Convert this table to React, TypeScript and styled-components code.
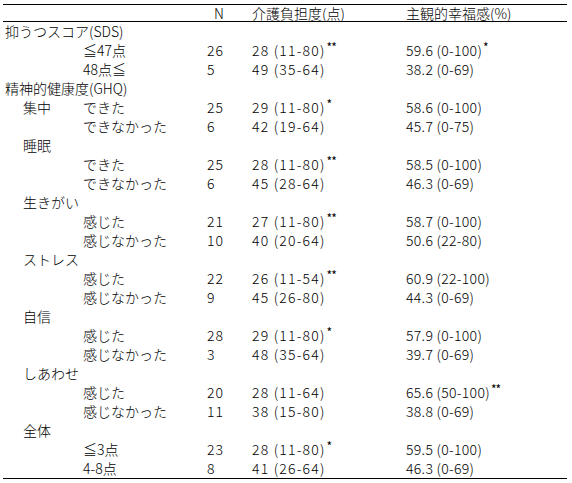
import styled, { createGlobalStyle } from "styled-components";

type Row =
  | { kind: "cat"; label: string }
  | { kind: "sub"; label: string }
  | {
      kind: "val";
      sub?: string;
      label: string;
      n: string;
      care: string;
      careSig?: string;
      happy: string;
      happySig?: string;
    };

const ROWS: Row[] = [
  { kind: "cat", label: "抑うつスコア(SDS)" },
  { kind: "val", label: "≦47点", n: "26", care: "28 (11-80)", careSig: "**", happy: "59.6 (0-100)", happySig: "*" },
  { kind: "val", label: "48点≦", n: "5", care: "49 (35-64)", happy: "38.2 (0-69)" },
  { kind: "cat", label: "精神的健康度(GHQ)" },
  { kind: "val", sub: "集中", label: "できた", n: "25", care: "29 (11-80)", careSig: "*", happy: "58.6 (0-100)" },
  { kind: "val", label: "できなかった", n: "6", care: "42 (19-64)", happy: "45.7 (0-75)" },
  { kind: "sub", label: "睡眠" },
  { kind: "val", label: "できた", n: "25", care: "28 (11-80)", careSig: "**", happy: "58.5 (0-100)" },
  { kind: "val", label: "できなかった", n: "6", care: "45 (28-64)", happy: "46.3 (0-69)" },
  { kind: "sub", label: "生きがい" },
  { kind: "val", label: "感じた", n: "21", care: "27 (11-80)", careSig: "**", happy: "58.7 (0-100)" },
  { kind: "val", label: "感じなかった", n: "10", care: "40 (20-64)", happy: "50.6 (22-80)" },
  { kind: "sub", label: "ストレス" },
  { kind: "val", label: "感じた", n: "22", care: "26 (11-54)", careSig: "**", happy: "60.9 (22-100)" },
  { kind: "val", label: "感じなかった", n: "9", care: "45 (26-80)", happy: "44.3 (0-69)" },
  { kind: "sub", label: "自信" },
  { kind: "val", label: "感じた", n: "28", care: "29 (11-80)", careSig: "*", happy: "57.9 (0-100)" },
  { kind: "val", label: "感じなかった", n: "3", care: "48 (35-64)", happy: "39.7 (0-69)" },
  { kind: "sub", label: "しあわせ" },
  { kind: "val", label: "感じた", n: "20", care: "28 (11-64)", happy: "65.6 (50-100)", happySig: "**" },
  { kind: "val", label: "感じなかった", n: "11", care: "38 (15-80)", happy: "38.8 (0-69)" },
  { kind: "sub", label: "全体" },
  { kind: "val", label: "≦3点", n: "23", care: "28 (11-80)", careSig: "*", happy: "59.5 (0-100)" },
  { kind: "val", label: "4-8点", n: "8", care: "41 (26-64)", happy: "46.3 (0-69)" },
];

const GlobalStyle = createGlobalStyle`
  html, body {
    margin: 0;
    background: #fff;
  }
`;

const Page = styled.div`
  padding: 4px 0 0 3px;
  font-family: "Noto Sans CJK JP", "Liberation Sans", sans-serif;
  font-size: 14px;
  font-weight: 300;
  color: #000;
`;

const Table = styled.table`
  width: 564px;
  table-layout: fixed;
  border-collapse: separate;
  border-spacing: 0;
  border-top: 1px solid #000;
  border-bottom: 1px solid #000;
`;

const Head = styled.th<{ $pad?: number }>`
  height: 16px;
  padding: 0 0 0 ${(p) => p.$pad ?? 0}px;
  border-bottom: 1px solid #000;
  font-weight: 300;
  text-align: left;
  line-height: 16px;
  white-space: nowrap;
`;

const Cell = styled.td<{ $pad?: number; $spacing?: number }>`
  height: 19px;
  padding: 0 0 0 ${(p) => p.$pad ?? 0}px;
  line-height: 19px;
  letter-spacing: ${(p) => p.$spacing ?? 0}px;
  white-space: pre;
  vertical-align: middle;
`;

const Sup = styled.sup`
  font-size: 12px;
  font-weight: 400;
  line-height: 0;
  vertical-align: 4px;
  letter-spacing: -1px;
  margin-left: 1px;
`;

export default function App() {
  return (
    <>
      <GlobalStyle />
      <Page>
        <Table>
          <colgroup>
            <col style={{ width: 20 }} />
            <col style={{ width: 60 }} />
            <col style={{ width: 124 }} />
            <col style={{ width: 45 }} />
            <col style={{ width: 154 }} />
            <col style={{ width: 161 }} />
          </colgroup>
          <thead>
            <tr>
              <Head colSpan={3} />
              <Head $pad={7}>N</Head>
              <Head>介護負担度(点)</Head>
              <Head>主観的幸福感(%)</Head>
            </tr>
          </thead>
          <tbody>
            {ROWS.map((r, i) => {
              if (r.kind === "cat")
                return (
                  <tr key={i}>
                    <Cell colSpan={6} $pad={2}>
                      {r.label}
                    </Cell>
                  </tr>
                );
              if (r.kind === "sub")
                return (
                  <tr key={i}>
                    <Cell />
                    <Cell colSpan={5}>{r.label}</Cell>
                  </tr>
                );
              return (
                <tr key={i}>
                  <Cell />
                  <Cell>{r.sub ?? ""}</Cell>
                  <Cell>{r.label}</Cell>
                  <Cell $spacing={1}>{r.n}</Cell>
                  <Cell $spacing={1.2}>
                    {r.care}
                    {r.careSig && <Sup>{r.careSig}</Sup>}
                  </Cell>
                  <Cell $spacing={0.3}>
                    {r.happy}
                    {r.happySig && <Sup>{r.happySig}</Sup>}
                  </Cell>
                </tr>
              );
            })}
          </tbody>
        </Table>
      </Page>
    </>
  );
}
